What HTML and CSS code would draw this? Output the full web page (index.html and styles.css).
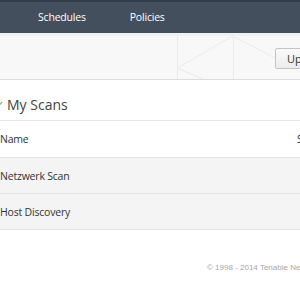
FILE: index.html
```html
<!DOCTYPE html>
<html>
  <head>
    <title>My Scans</title>
    <link rel="stylesheet" href="styles.css">
  </head>
  <body>
    <div class="page">
      <nav class="topnav">
        <a class="nav-link" href="#">Schedules</a>
        <a class="nav-link" href="#">Policies</a>
      </nav>

      <div class="toolbar">
        <svg class="pattern" width="300" height="44" viewBox="0 0 300 44">
          <g fill="none" stroke="#ebebeb" stroke-width="1">
            <line x1="177.5" y1="0" x2="177.5" y2="44" />
            <line x1="233.5" y1="0" x2="233.5" y2="44" />
            <polyline points="233,0 177,32 205,44" />
            <polyline points="233,0 290,30" />
          </g>
        </svg>
        <button class="btn">Upload</button>
      </div>

      <main class="content">
        <h2 class="title">
          <span class="caret"></span>
          My Scans
        </h2>

        <div class="table">
          <div class="row head">
            <div class="cell name">Name</div>
            <div class="cell sched">Schedule</div>
          </div>
          <div class="row item">
            <div class="cell name">Netzwerk Scan</div>
            <div class="cell sched"></div>
          </div>
          <div class="row item">
            <div class="cell name">Host Discovery</div>
            <div class="cell sched"></div>
          </div>
        </div>
      </main>

      <footer class="footer">
        <span>&copy; 1998 - 2014 Tenable Network Security&reg;</span>
      </footer>
    </div>
  </body>
</html>
```

FILE: styles.css
```css
html,
body {
  margin: 0;
  overflow: hidden;
}
body {
  font-family: "Open Sans", "Noto Sans", sans-serif;
  color: #333;
  background: #fff;
}
.page {
  width: 300px;
}

.topnav {
  height: 33px;
  background: #434f5d;
  border-top: 2px solid #323d49;
  box-sizing: border-box;
  display: flex;
  align-items: center;
  padding-left: 38px;
  gap: 44px;
}
.nav-link {
  color: #fff;
  text-decoration: none;
  font-size: 10.5px;
  letter-spacing: -0.2px;
  padding-bottom: 1px;
}

.toolbar {
  position: relative;
  height: 47px;
  background: #f8f8f8;
  border-top: 3px solid #eef1f5;
  border-bottom: 1px solid #dcdcdc;
  display: flex;
  align-items: center;
  padding-left: 275px;
  overflow: hidden;
  box-sizing: border-box;
}
.pattern {
  position: absolute;
  left: 0;
  top: 0;
}
.btn {
  position: relative;
  flex: none;
  height: 21px;
  padding: 0 11px;
  margin-top: 1px;
  font-family: inherit;
  font-size: 11px;
  color: #333;
  background: linear-gradient(#fafafa, #ececec);
  border: 1px solid #c4c4c4;
  border-radius: 2px;
}

.content {
  margin-left: -12px;
}
.title {
  margin: 0;
  height: 41px;
  display: flex;
  align-items: center;
  gap: 6px;
  padding-top: 8px;
  font-size: 14px;
  font-weight: normal;
  color: #444;
  border-bottom: 1px solid #e4e4e4;
  box-shadow: 0 1px 1px rgba(0, 0, 0, 0.03);
  box-sizing: border-box;
}
.caret {
  flex: none;
  width: 6px;
  height: 6px;
  border-right: 1px solid #888;
  border-bottom: 1px solid #888;
  transform: rotate(45deg);
  margin-left: 6px;
  margin-bottom: 4px;
}

.table {
  width: 420px;
  font-size: 10.5px;
  letter-spacing: -0.2px;
}
.row {
  display: flex;
  align-items: center;
  height: 36px;
  border-bottom: 1px solid #e2e2e2;
  box-sizing: border-box;
}
.row.head {
  height: 37px;
  background: #fff;
}
.row.item {
  background: #f4f4f4;
}
.name {
  width: 309px;
  padding-left: 12px;
  box-sizing: border-box;
  color: #333;
}
.sched {
  color: #333;
}

.footer {
  margin-top: 33px;
  padding-left: 207px;
  white-space: nowrap;
  font-family: "Liberation Sans", Arial, sans-serif;
  font-size: 8px;
  color: #a8a8a8;
}
```
